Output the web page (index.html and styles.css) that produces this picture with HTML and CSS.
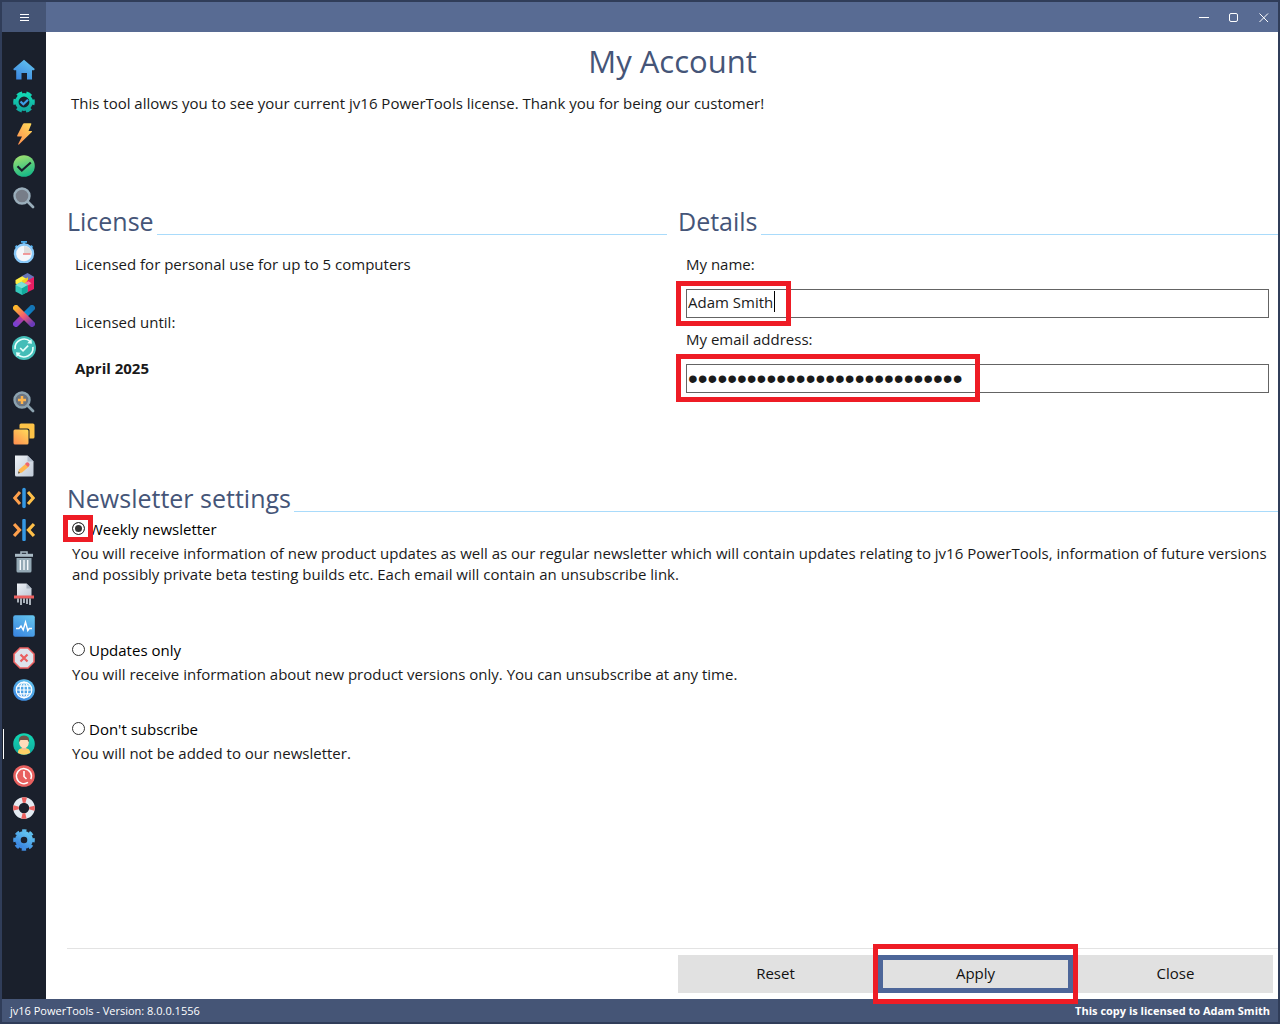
FILE: index.html
```html
<!DOCTYPE html>
<html lang="en">
<head>
<meta charset="utf-8">
<meta name="viewport" content="width=device-width, initial-scale=1">
<title>jv16 PowerTools - My Account</title>
<link rel="stylesheet" href="styles.css">
</head>
<body>
<svg class="defs" width="0" height="0" aria-hidden="true">
  <defs>
    <linearGradient id="blue" x1="0.8" y1="0" x2="0.2" y2="1"><stop offset="0" stop-color="#63c3ee"/><stop offset="1" stop-color="#3a86e0"/></linearGradient>
    <linearGradient id="teal" x1="0" y1="0" x2="0" y2="1"><stop offset="0" stop-color="#12d8b4"/><stop offset="1" stop-color="#12a99f"/></linearGradient>
    <linearGradient id="orange" x1="0.9" y1="0" x2="0.1" y2="1"><stop offset="0" stop-color="#ffd95a"/><stop offset="1" stop-color="#ff9050"/></linearGradient>
    <linearGradient id="green" x1="0.3" y1="0" x2="0.6" y2="1"><stop offset="0" stop-color="#9fe070"/><stop offset="1" stop-color="#12b888"/></linearGradient>
    <linearGradient id="paper" x1="0" y1="0" x2="1" y2="1"><stop offset="0" stop-color="#eef2f7"/><stop offset="1" stop-color="#bfc9d6"/></linearGradient>
    <linearGradient id="warm" x1="0" y1="0" x2="1" y2="1"><stop offset="0" stop-color="#fdb52c"/><stop offset="0.5" stop-color="#f25a72"/><stop offset="1" stop-color="#6a3ab8"/></linearGradient>
    <linearGradient id="cool" x1="1" y1="0" x2="0" y2="1"><stop offset="0" stop-color="#1474b4"/><stop offset="0.4" stop-color="#0b8cd0"/><stop offset="0.55" stop-color="#c23a92"/><stop offset="1" stop-color="#7a40d0"/></linearGradient>
  </defs>
</svg>

<div class="window">
  <header class="titlebar">
    <button class="titlebar-menu" type="button" aria-label="Menu">
      <svg width="10" height="8" viewBox="0 0 10 8"><path d="M0 .5h9M0 3.500h9M0 6.500h9" stroke="#fff"/></svg>
    </button>
    <div class="titlebar-controls">
      <button type="button" aria-label="Minimize"><svg width="10" height="10" viewBox="0 0 10 10"><path d="M0 4.500h10" stroke="#fff"/></svg></button>
      <button type="button" aria-label="Maximize"><svg width="10" height="10" viewBox="0 0 10 10"><rect x=".5" y=".5" width="8" height="8" rx="1.500" fill="none" stroke="#fff"/></svg></button>
      <button type="button" aria-label="Close window"><svg width="10" height="10" viewBox="0 0 10 10"><path d="M.5.5l8.500 8.500M9 .5l-8.500 8.500" stroke="#fff"/></svg></button>
    </div>
  </header>

  <div class="workspace">
    <nav class="sidebar" aria-label="Tools">
      <div class="tool-group">
        <a class="tool" href="#home" aria-label="Home"><svg viewBox="0 0 22 22"><path d="M11 .8 21.800 10 21 11.200H19V20.500H14V14H8.500V20.500H3.200V11.200H1L.2 10Z" fill="url(#blue)"/></svg></a>
        <a class="tool" href="#health" aria-label="Health check"><svg viewBox="0 0 22 22"><circle cx="11" cy="11" r="7.200" fill="none" stroke="url(#teal)" stroke-width="3.500"/><circle cx="11" cy="11" r="9.300" fill="none" stroke="url(#teal)" stroke-width="3" stroke-dasharray="5.500 4.239" stroke-dashoffset="2.750"/><path d="m7.500 10.500 2.800 2.800 4.700-4.600" fill="none" stroke="#3d9fe8" stroke-width="2.200"/></svg></a>
        <a class="tool" href="#boost" aria-label="Boost"><svg viewBox="0 0 22 22"><path d="M10 1q.4-.8 1.200-.8H17.500q1.200 0 .8 1L15.500 8H18.500q1 0 .3 1L6 21.500q-1 .5-.7-.7L9 13.500H4.800q-1 0-.6-1Z" fill="url(#orange)"/></svg></a>
        <a class="tool" href="#fix" aria-label="Quick fix"><svg viewBox="0 0 22 22"><circle cx="11" cy="11" r="10.800" fill="url(#green)"/><path d="m4.500 11.200 4.300 4.300 9-8" fill="none" stroke="#1a202c" stroke-width="2.200"/></svg></a>
        <a class="tool" href="#search" aria-label="Search"><svg viewBox="0 0 22 22"><path d="m14 14 6 6" stroke="#9aaebb" stroke-width="2.800" stroke-linecap="round"/><circle cx="9" cy="9" r="7.500" fill="#777d88" stroke="#9aaebb" stroke-width="2.400"/></svg></a>
      </div>
      <div class="tool-group">
        <a class="tool" href="#startup" aria-label="Startup timer"><svg viewBox="0 0 22 22"><path d="M8 .5h6M11 .5v3M2.500 5l2.500 2M19.500 5 17 7" stroke="#4aa9e8" stroke-width="2.500"/><circle cx="11" cy="12.500" r="9" fill="#f4f6fa" stroke="#88c8f8" stroke-width="2.400"/><path d="M11 12.500V5a7.500 7.500 0 0 1 7.500 7.500Z" fill="#ddd"/><path d="M10 13h7.500" stroke="#f06060" stroke-width="1.200"/></svg></a>
        <a class="tool" href="#software" aria-label="Software"><svg viewBox="0 0 22 22"><path d="m9 3 5.500-3 6.500 3.800v5L15 8.500 9 5Z" fill="#6675b8"/><path d="m2.500 7 6.500-3.700 6 3.400V12l-6 2-6.500-3.500Z" fill="#ffee45"/><path d="m9 7.500 6-3.200v7.500l-6 2Z" fill="#f0cf20"/><path d="m12 10.500 3-3.200 6-3.200v12L13 20Z" fill="#e91e63"/><path d="m9 11 6.500-2.800 3 2-4 2.500Z" fill="#fa78a0"/><path d="m2.500 12 6-3.300 6 3.300v7L9 22l-6.500-3.500Z" fill="#35c8bb"/><path d="m8.800 15.300 5.700-3.300v7L8.800 22Z" fill="#11a99d"/><path d="m2.500 12 6-3.300 6 3.300-5.700 3.300Z" fill="#7be0d6"/></svg></a>
        <a class="tool" href="#uninstall" aria-label="Uninstaller"><svg viewBox="0 0 22 22"><path d="M3 19 19 3" stroke="url(#cool)" stroke-width="6" stroke-linecap="round"/><path d="M3 3 19 19" stroke="url(#warm)" stroke-width="6" stroke-linecap="round"/></svg></a>
        <a class="tool" href="#updates" aria-label="Updates"><svg class="large" viewBox="0 0 22 22"><circle cx="11" cy="11" r="11" fill="#43bdb8"/><path d="M2.800 12a8.300 8.300 0 0 1 14-6.800M19.200 10a8.300 8.300 0 0 1-14 6.800" fill="none" stroke="#e6fffc" stroke-width="1.500"/><path d="m17.800 2.700.5 4.300-4.300-.4ZM4.200 19.300 3.700 15l4.300.4Z" fill="#e6fffc"/><path d="m7.500 11 2.600 2.600 4.700-4.800" fill="none" stroke="#e6fffc" stroke-width="1.500"/></svg></a>
      </div>
      <div class="tool-group">
        <a class="tool" href="#finder" aria-label="File finder"><svg viewBox="0 0 22 22"><path d="m14 14 6 6" stroke="#8ca2af" stroke-width="2.800" stroke-linecap="round"/><circle cx="9" cy="9" r="7.500" fill="#6b7480" stroke="#8ca2af" stroke-width="2.400"/><path d="M9 5v8M5 9h8" stroke="#ffb44c" stroke-width="2.500"/></svg></a>
        <a class="tool" href="#duplicates" aria-label="Duplicates"><svg viewBox="0 0 22 22"><rect x="6.500" y=".5" width="15" height="15" rx="1.500" fill="#fec347"/><rect x="-.5" y="5.500" width="17" height="17" rx="2" fill="#1a202c"/><rect x=".5" y="6.500" width="15" height="15" rx="1.500" fill="url(#orange)"/></svg></a>
        <a class="tool" href="#rename" aria-label="Rename"><svg viewBox="0 0 22 22"><path d="M2 .5h12.500l6 6V20q0 1.500-1.500 1.500H3.500Q2 21.500 2 20Z" fill="url(#paper)"/><path d="M14.500.5v6h6Z" fill="#aebaca"/><path d="m5 18.500 1-4 7-6 3 3L9 17.500Z" fill="#ffb74f"/><path d="m12 9 1.500-1.500q1.300-.6 2.400.6t.6 2.200L15 12Z" fill="#ee6670"/><path d="m5 18.500.5-2.200 1.700 1.700Z" fill="#555"/></svg></a>
        <a class="tool" href="#split" aria-label="Split"><svg viewBox="0 0 22 22"><path d="m7 5-5.200 6L7 17" fill="none" stroke="#ffa04c" stroke-width="3"/><path d="m15 5 5.200 6-5.200 6" fill="none" stroke="#ffc049" stroke-width="3"/><path d="M11 2.500v17" stroke="#3498e4" stroke-width="3.500" stroke-linecap="round"/></svg></a>
        <a class="tool" href="#merge" aria-label="Merge"><svg viewBox="0 0 22 22"><path d="m1 5 5.500 6L1 17" fill="none" stroke="#ffa04c" stroke-width="3.300"/><path d="m21 5-5.500 6 5.500 6" fill="none" stroke="#ffc049" stroke-width="3.300"/><path d="M11 1.500v19" stroke="#3498e4" stroke-width="3.500" stroke-linecap="round"/></svg></a>
        <a class="tool" href="#clean" aria-label="Cleaner"><svg viewBox="0 0 22 22"><path d="M8 3V1h6v2" fill="none" stroke="#a9bac5" stroke-width="1.500"/><rect x="2" y="2.800" width="18" height="3" fill="#a9bac5"/><path d="M3.500 7h15v13q0 1.500-1.500 1.500H5q-1.500 0-1.500-1.500Z" fill="#94a9b5"/><path d="M7.300 9v10M11 9v10M14.700 9v10" stroke="#f4f8fb" stroke-width="1.400"/></svg></a>
        <a class="tool" href="#shred" aria-label="Shredder"><svg viewBox="0 0 22 22"><path d="M4 .5h9.500l5 5V13H4Z" fill="url(#paper)"/><path d="M13.500.5v5h5Z" fill="#a8b3c0"/><rect x="1" y="12.500" width="20" height="3" fill="#eb6060"/><path d="M5 15.500v4M8 15.500V22M11 15.500V20M14 15.500V21M17 15.500V22" stroke="#d8dfe7" stroke-width="1.500"/></svg></a>
        <a class="tool" href="#monitor" aria-label="System monitor"><svg viewBox="0 0 22 22"><rect x=".2" y=".2" width="21.600" height="21.600" rx="2" fill="url(#blue)"/><path d="M3 13.500h3L8 11l2.200 4L12.500 7l2.300 8.500 1.400-2H19" fill="none" stroke="#fff" stroke-width="1.400"/></svg></a>
        <a class="tool" href="#block" aria-label="Blocker"><svg viewBox="0 0 22 22"><path d="M7 1h8l6 6v8l-6 6H7l-6-6V7Z" fill="#dde4ec" stroke="#ea6060" stroke-width="1.600"/><path d="m7.500 7.500 7 7M14.500 7.500l-7 7" stroke="#ea6060" stroke-width="2.200"/></svg></a>
        <a class="tool" href="#internet" aria-label="Internet"><svg viewBox="0 0 22 22"><circle cx="11" cy="11" r="10.800" fill="url(#blue)"/><g fill="none" stroke="#fff" stroke-width="1.200"><circle cx="11" cy="11" r="7.800"/><ellipse cx="11" cy="11" rx="3.800" ry="7.800"/><path d="M11 3.200v15.600M3.200 11h15.600M4.500 7.200h13M4.500 14.800h13"/></g></svg></a>
      </div>
      <div class="tool-group">
        <a class="tool tool-active" href="#account" aria-label="My Account" aria-current="page"><svg viewBox="0 0 22 22"><circle cx="11" cy="11" r="10.800" fill="url(#teal)"/><path d="M5 20q-.5-4 4-4.800h4q4.500.8 4 4.800-6 3.500-12 0Z" fill="#ffd166"/><path d="M8.800 13h4.400v3q-2.200 2.500-4.400 0Z" fill="#f3bf98"/><ellipse cx="11" cy="9.500" rx="4.800" ry="5.600" fill="#ffdcba"/><path d="M5.800 9.500Q5 2.500 11 2.500t5.200 7L14.500 7h-7Z" fill="#725448"/></svg></a>
        <a class="tool" href="#history" aria-label="History"><svg viewBox="0 0 22 22"><circle cx="11" cy="11" r="10.800" fill="#e8605f"/><path d="M15 17.400a7.500 7.500 0 1 1 2.800-3.300" fill="none" stroke="#fff" stroke-width="1.500"/><path d="M11 6v5.500l2.500 2.500" fill="none" stroke="#fff" stroke-width="1.600"/></svg></a>
        <a class="tool" href="#support" aria-label="Support"><svg viewBox="0 0 22 22"><circle cx="11" cy="11" r="8" fill="none" stroke="#e4ebf2" stroke-width="5.600"/><circle cx="11" cy="11" r="8" fill="none" stroke="#ec6260" stroke-width="5.600" stroke-dasharray="4 8.566" stroke-dashoffset="2"/></svg></a>
        <a class="tool" href="#settings" aria-label="Settings"><svg viewBox="0 0 22 22"><circle cx="11" cy="11" r="6.100" fill="none" stroke="url(#blue)" stroke-width="5.600"/><circle cx="11" cy="11" r="9.200" fill="none" stroke="url(#blue)" stroke-width="3.200" stroke-dasharray="4.200 3.025" stroke-dashoffset="2.100"/></svg></a>
      </div>
    </nav>

    <main class="content">
      <h1>My Account</h1>
      <p class="intro">This tool allows you to see your current jv16 PowerTools license. Thank you for being our customer!</p>

      <div class="columns">
        <section>
          <h2>License</h2>
          <div class="section-body">
            <p>Licensed for personal use for up to 5 computers</p>
            <p class="until">Licensed until:</p>
            <p class="until-date">April 2025</p>
          </div>
        </section>
        <section>
          <h2>Details</h2>
          <div class="section-body">
            <div class="field">
              <label for="name">My name:</label>
              <div class="field-box">
                <input id="name" type="text" value="Adam Smith">
                <span class="caret"></span>
                <span class="mark mark-name"></span>
              </div>
            </div>
            <div class="field">
              <label for="email">My email address:</label>
              <div class="field-box">
                <input id="email" class="masked" type="password" value="adam.smith.mail@example.host">
                <span class="mark mark-email"></span>
              </div>
            </div>
          </div>
        </section>
      </div>

      <section class="newsletter">
        <h2>Newsletter settings</h2>
        <div class="option option-long">
          <div class="option-row">
            <input id="weekly" type="radio" name="newsletter" checked>
            <label for="weekly">Weekly newsletter</label>
            <span class="mark mark-radio"></span>
          </div>
          <p>You will receive information of new product updates as well as our regular newsletter which will contain updates relating to jv16 PowerTools, information of future versions and possibly private beta testing builds etc. Each email will contain an unsubscribe link.</p>
        </div>
        <div class="option">
          <div class="option-row">
            <input id="updates-only" type="radio" name="newsletter">
            <label for="updates-only">Updates only</label>
          </div>
          <p>You will receive information about new product versions only. You can unsubscribe at any time.</p>
        </div>
        <div class="option">
          <div class="option-row">
            <input id="none" type="radio" name="newsletter">
            <label for="none">Don't subscribe</label>
          </div>
          <p>You will not be added to our newsletter.</p>
        </div>
      </section>

      <div class="actions">
        <div class="action-buttons">
          <button type="button">Reset</button>
          <div class="apply-box">
            <button class="apply" type="button">Apply</button>
            <span class="mark mark-apply"></span>
          </div>
          <button type="button">Close</button>
        </div>
      </div>
    </main>
  </div>

  <footer class="statusbar">
    <span>jv16 PowerTools - Version: 8.0.0.1556</span>
    <strong>This copy is licensed to Adam Smith</strong>
  </footer>
</div>
</body>
</html>
```
FILE: styles.css
```css
* {
  box-sizing: border-box;
}

body {
  margin: 0;
  background: #fff;
  color: #1a1a1a;
  font: 15px/21px "Open Sans", "Noto Sans", sans-serif;
}

h1, h2, p {
  margin: 0;
}

button, input {
  margin: 0;
  font: inherit;
  color: inherit;
}

.defs {
  position: absolute;
}

.window {
  display: flex;
  flex-direction: column;
  min-height: 100vh;
  border: 2px solid #303d59;
}

/* Title bar */
.titlebar {
  display: flex;
  justify-content: space-between;
  height: 30px;
  background: #586b93;
}

.titlebar button {
  display: flex;
  align-items: center;
  justify-content: center;
  padding: 2px 0 0 2px;
  border: 0;
  background: none;
}

.titlebar .titlebar-menu {
  width: 44px;
  background: #455576;
}

.titlebar-controls {
  display: flex;
}

.titlebar-controls button {
  width: 30px;
}

/* Sidebar */
.workspace {
  display: flex;
  flex: 1;
}

.sidebar {
  display: flex;
  flex-direction: column;
  flex: none;
  gap: 22px;
  width: 44px;
  padding: 22px 0;
  background: #1a202c;
}

.tool {
  display: flex;
  align-items: center;
  justify-content: center;
  height: 32px;
  position: relative;
}

.tool svg {
  width: 22px;
  height: 22px;
}

.tool .large {
  width: 24px;
  height: 24px;
}

.tool-active::before {
  content: "";
  position: absolute;
  left: 1px;
  top: 1px;
  width: 1px;
  height: 30px;
  background: #fff;
}

/* Content */
.content {
  display: flex;
  flex-direction: column;
  flex: 1;
  min-width: 0;
  padding: 10px 0 6px 21px;
}

h1 {
  color: #455578;
  font-size: 31px;
  font-weight: 400;
  line-height: 38px;
  text-align: center;
}

.intro {
  margin-top: 13px;
  padding-left: 4px;
}

.columns {
  display: grid;
  grid-template-columns: 1fr 1fr;
  gap: 11px;
  margin-top: 90px;
}

h2 {
  display: flex;
  gap: 3px;
  height: 36px;
  color: #455578;
  font-size: 25px;
  font-weight: 400;
  line-height: 34px;
}

h2::after {
  content: "";
  flex: 1;
  align-self: flex-end;
  height: 1px;
  margin-bottom: 5px;
  background: #a9dbfb;
}

.section-body {
  padding: 14px 9px 0 8px;
}

.until {
  margin-top: 37px;
}

.until-date {
  margin-top: 25px;
  font-weight: 700;
}

.field + .field {
  margin-top: 11px;
}

.field label {
  display: block;
  margin-bottom: 14px;
}

.field-box {
  position: relative;
}

.field input {
  display: block;
  width: 100%;
  height: 29px;
  padding: 0 1px 4px;
  border: 1px solid #646464;
  background: #fff;
  outline: 0;
}

.field .masked {
  padding: 0 1px;
  font: 28px/27px "Liberation Sans", sans-serif;
}

.caret {
  position: absolute;
  left: 88px;
  top: 2px;
  width: 1px;
  height: 21px;
  background: #000;
}

/* Red emphasis frames */
.mark {
  position: absolute;
  border: 5px solid #ee1c25;
  pointer-events: none;
}

.mark-name {
  left: -10px;
  top: -8px;
  width: 115px;
  height: 45px;
}

.mark-email {
  left: -10px;
  top: -10px;
  width: 304px;
  height: 48px;
}

.mark-radio {
  left: -9px;
  top: -2px;
  width: 30px;
  height: 27px;
}

.mark-apply {
  inset: -11px -5px;
}

/* Newsletter */
.newsletter {
  margin-top: 88px;
}

.option {
  margin-bottom: 32px;
  padding: 0 5px;
}

.option-long {
  margin-bottom: 53px;
}

.option-row {
  display: flex;
  align-items: center;
  gap: 4px;
  height: 24px;
  margin-bottom: 2px;
  color: #000;
  position: relative;
}

.option-row input {
  appearance: none;
  width: 13px;
  height: 13px;
  margin-bottom: 2px;
  border: 1px solid #333;
  border-radius: 50%;
  background: #fff;
}

.option-row input:checked {
  background: #333;
  border-color: #333;
  box-shadow: inset 0 0 0 2px #fff;
}

/* Action bar */
.actions {
  display: grid;
  grid-template-columns: 1fr 1fr;
  gap: 11px;
  margin-top: auto;
  padding-top: 6px;
  border-top: 1px solid #e3e3e3;
}

.action-buttons {
  display: grid;
  grid-column: 2;
  grid-template-columns: repeat(3, 1fr);
  gap: 5px;
  padding-right: 5px;
}

.action-buttons button {
  width: 100%;
  height: 38px;
  padding: 0 0 2px;
  border: 0;
  background: #e1e1e1;
  color: #111;
}

.action-buttons .apply {
  border: 5px solid #4d6699;
}

.apply-box {
  position: relative;
}

/* Status bar */
.statusbar {
  display: flex;
  justify-content: space-between;
  height: 23px;
  padding: 0 8px;
  background: #455576;
  color: #fff;
  font-size: 11px;
  line-height: 23px;
}
```
